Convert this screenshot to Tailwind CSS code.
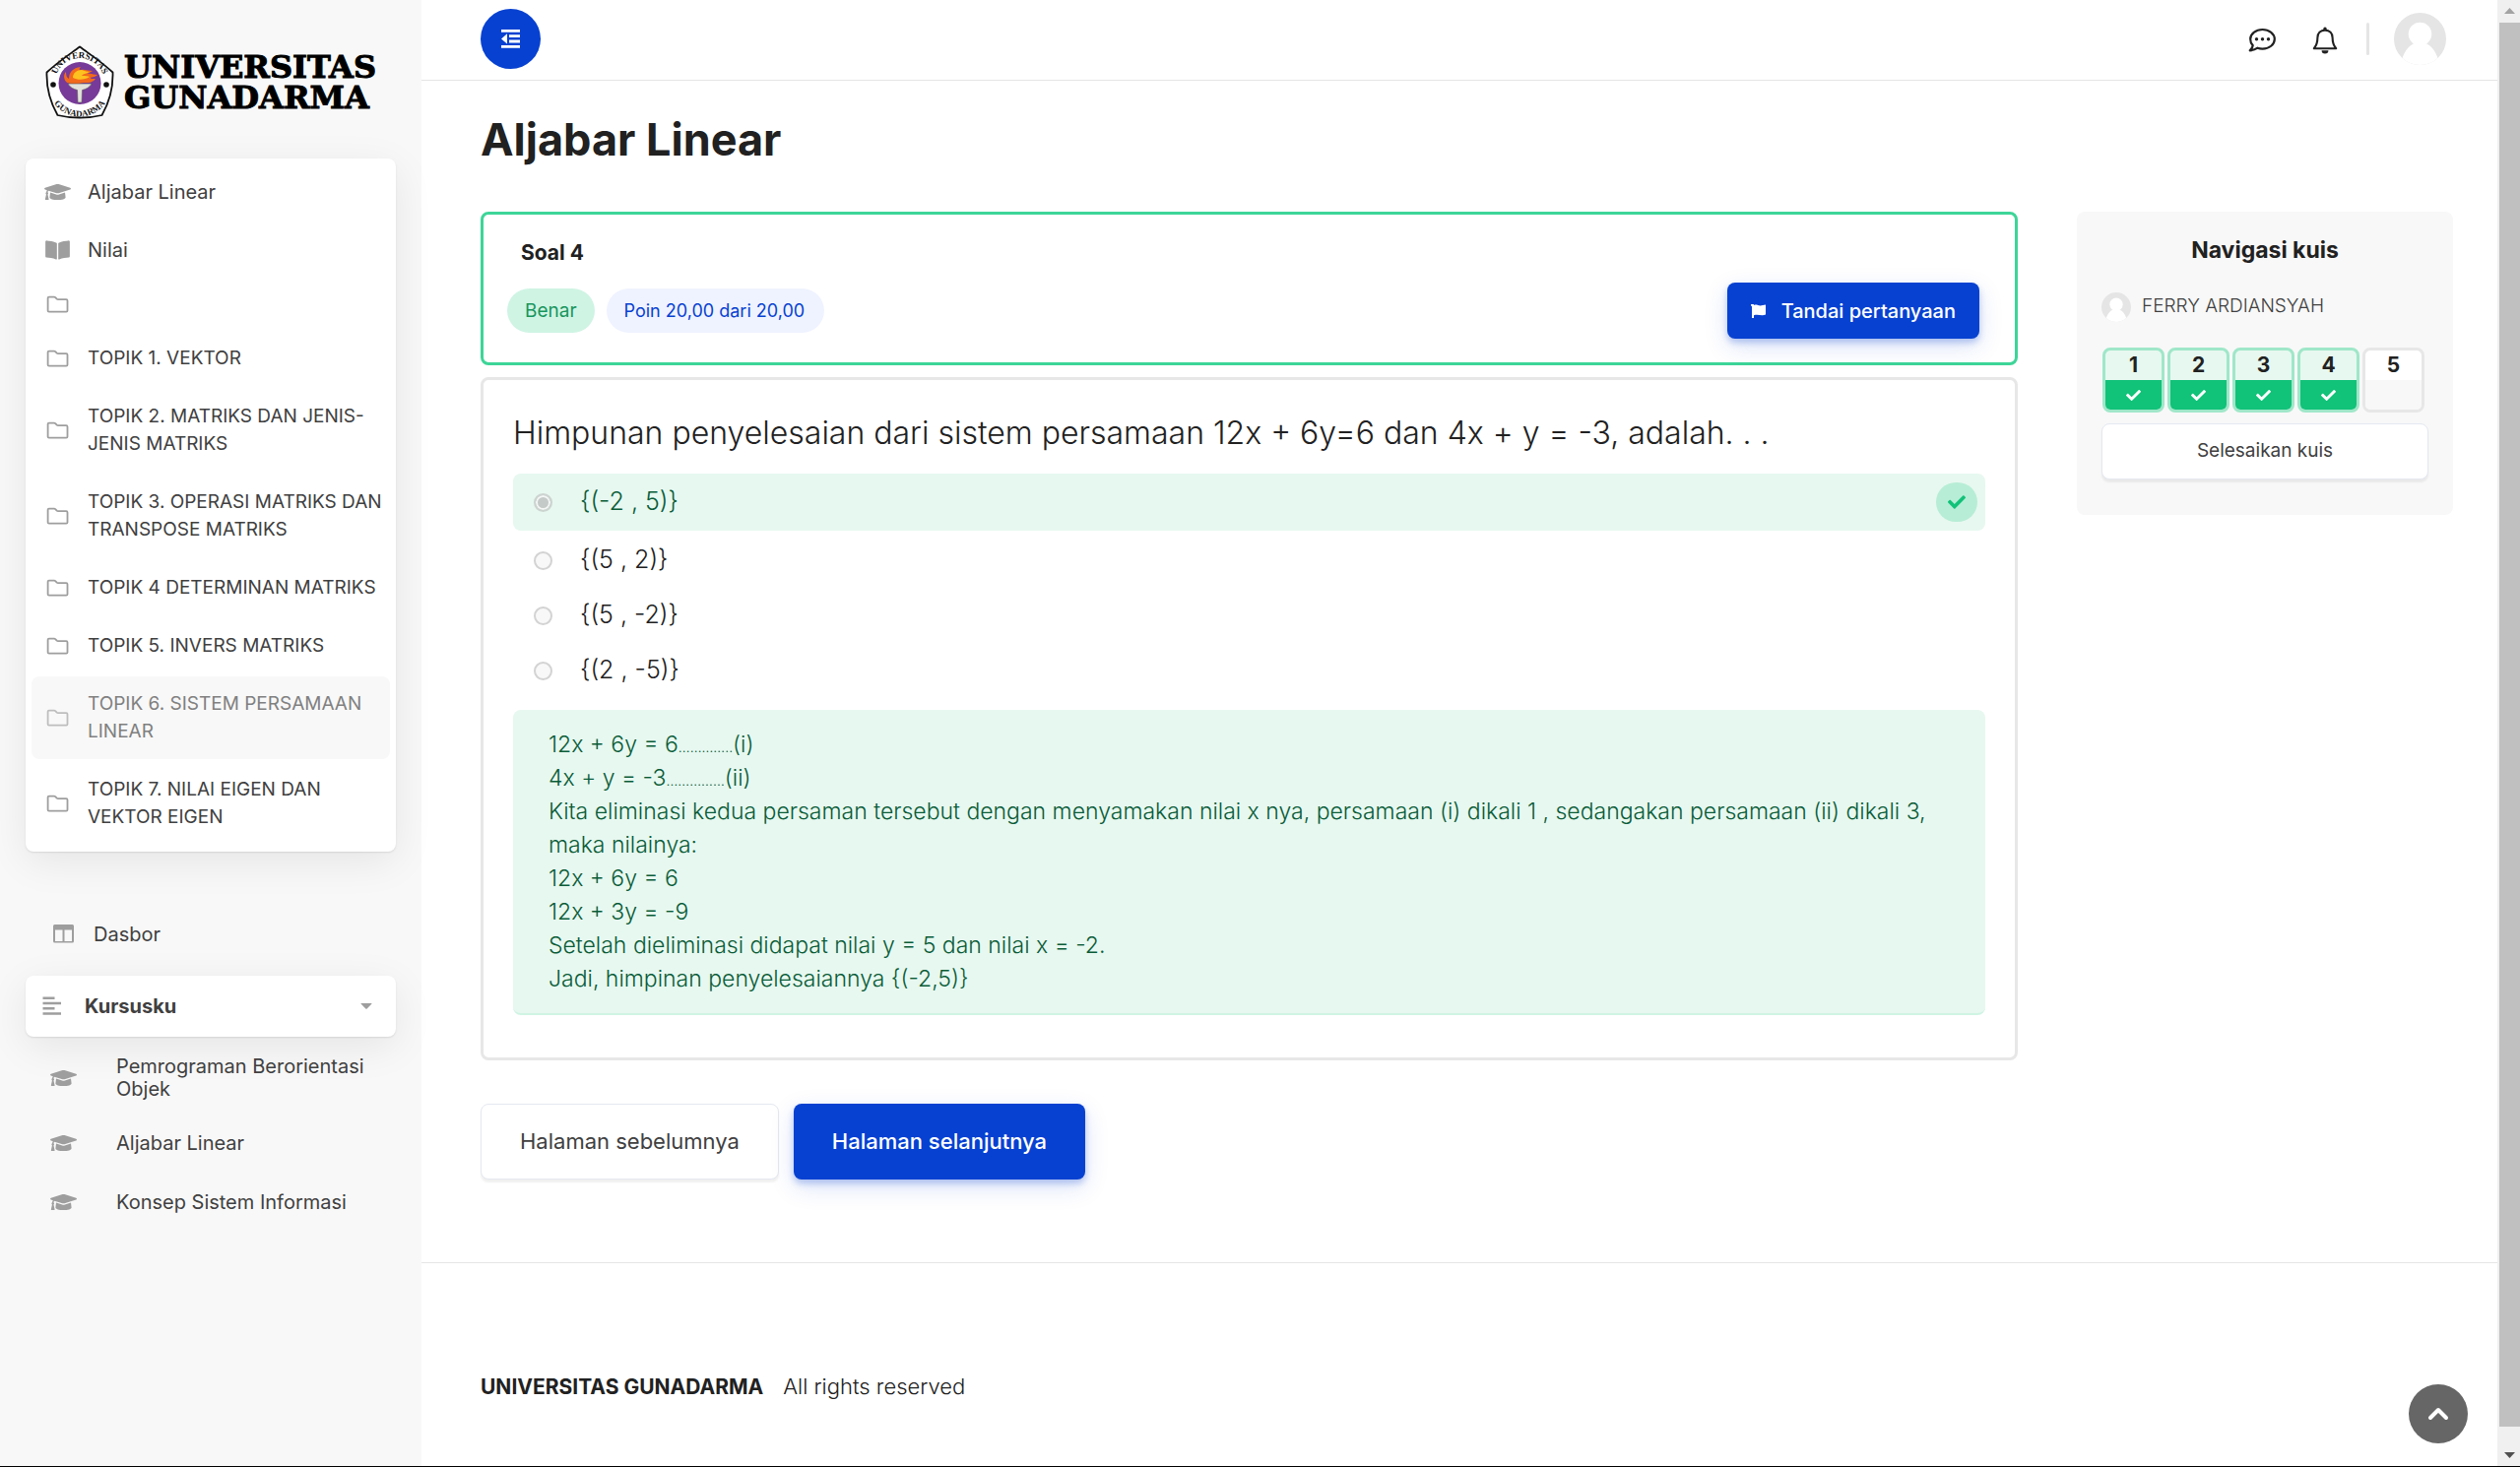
<!DOCTYPE html>
<html lang="id">
<head>
<meta charset="utf-8">
<meta name="viewport" content="width=device-width, initial-scale=1">
<title>Aljabar Linear</title>
<script src="https://cdn.jsdelivr.net/npm/@tailwindcss/browser@4"></script>
</head>
<body class="flex min-h-screen border-b border-black bg-white font-['Inter',sans-serif] text-[#212121]">

<!-- Icon definitions -->
<svg class="hidden" aria-hidden="true">
  <symbol id="cap" viewBox="0 0 640 512"><path fill="currentColor" d="M622.34 153.2L343.4 67.5c-15.2-4.67-31.6-4.67-46.79 0L17.66 153.2c-23.54 7.23-23.54 38.36 0 45.59l48.63 14.94c-10.67 13.19-17.23 29.28-17.88 46.9C38.78 266.15 32 276.11 32 288c0 10.78 5.68 19.85 13.86 25.65L20.33 428.53C18.11 438.52 25.71 448 35.94 448h56.11c10.24 0 17.84-9.48 15.62-19.47L82.14 313.65C90.32 307.85 96 298.78 96 288c0-11.57-6.47-21.25-15.66-26.87.76-15.02 8.44-28.3 20.69-36.72L296.6 284.5c9.06 2.78 26.44 6.25 46.79 0l278.95-85.7c23.55-7.24 23.55-38.36 0-45.6zM352.79 315.09c-28.53 8.76-52.84 3.92-65.59 0l-145.02-44.55L128 384c0 35.35 85.96 64 192 64s192-28.65 192-64l-14.18-113.47-145.03 44.56z"/></symbol>
  <symbol id="book" viewBox="0 0 576 512"><path fill="currentColor" d="M542.22 32.05c-54.8 3.11-163.72 14.43-230.96 55.59-4.64 2.84-7.27 7.89-7.27 13.17v363.87c0 11.55 12.63 18.85 23.28 13.49 69.18-34.82 169.23-44.32 218.7-46.92 16.89-.89 30.02-14.43 30.02-30.66V62.75c.01-17.71-15.35-31.74-33.77-30.7zM264.73 87.64C197.5 46.48 88.58 35.17 33.78 32.05 15.36 31.01 0 45.04 0 62.75V400.6c0 16.24 13.13 29.78 30.02 30.66 49.49 2.6 149.59 12.11 218.77 46.95 10.62 5.35 23.21-1.94 23.21-13.46V100.63c0-5.29-2.62-10.14-7.27-12.99z"/></symbol>
  <symbol id="folder" viewBox="0 0 22 18"><path fill="none" stroke="currentColor" stroke-width="1.8" stroke-linejoin="round" d="M2.3 1.6h5.2c.5 0 .9.2 1.2.5l1.5 1.6c.3.3.7.5 1.2.5h8.4c.7 0 1.2.5 1.2 1.2v10c0 .7-.5 1.2-1.2 1.2H2.3c-.7 0-1.2-.5-1.2-1.2V2.8c0-.7.5-1.2 1.2-1.2z"/></symbol>
  <symbol id="check" viewBox="0 0 512 512"><path fill="currentColor" d="M173.898 439.404l-166.4-166.4c-9.997-9.997-9.997-26.206 0-36.204l36.203-36.204c9.997-9.998 26.207-9.998 36.204 0L192 312.69 432.095 72.596c9.997-9.997 26.207-9.997 36.204 0l36.203 36.204c9.997 9.997 9.997 26.206 0 36.204l-294.4 294.401c-9.998 9.997-26.207 9.997-36.204-.001z"/></symbol>
  <symbol id="person" viewBox="0 0 54 54"><path fill="#e5e5e5" d="M0 0h54v54H0z"/><circle cx="27" cy="22" r="12" fill="#fff"/><path fill="#fff" d="M7 54C9 41 15 34 21 31.500h12C39 34 45 41 47 54z"/></symbol>
</svg>

<!-- Sidebar -->
<aside class="w-[428px] shrink-0 bg-[#f8f8f8] px-[26px]">
  <a href="#" class="flex h-[161px] gap-[10px] pt-[46px] pl-5">
    <svg class="h-[75px] w-[70px] shrink-0" viewBox="0 0 70 75" role="img" aria-label="Logo Universitas Gunadarma">
      <path d="M35 1.500C45 9 56 16 68.500 27.500 69 44 65 58 57.500 71 43 74.500 27 74.500 12.500 71 5 58 1 44 1.500 27.500 14 16 25 9 35 1.500z" fill="#fff" stroke="#111" stroke-width="1.800"/>
      <circle cx="35" cy="38.500" r="21.500" fill="#773a98"/>
      <path id="arcTop" d="M10 38A25 25 0 0 1 60 38" fill="none"/>
      <path id="arcBottom" d="M3.500 41A31.500 31.500 0 0 0 66.500 41" fill="none"/>
      <text class="font-['Liberation_Serif',serif] text-[9px] font-bold" fill="#111"><textPath href="#arcTop" startOffset="50%" text-anchor="middle">UNIVERSITAS</textPath></text>
      <text class="font-['Liberation_Serif',serif] text-[9px] font-bold" fill="#111"><textPath href="#arcBottom" startOffset="50%" text-anchor="middle">GUNADARMA</textPath></text>
      <circle cx="8" cy="40" r="2.800" fill="#111"/><circle cx="62" cy="40" r="2.800" fill="#111"/>
      <path d="M21 37c-3-4-2-8 0-10 0 4 1 6 3 7 0-7 4-11 12-12-2 2-2 3 0 3 4-1 8 1 12 1-3 2-5 2-5 3 4-1 6 1 10 1-3 3-6 2-7 3s3 1 5 1c-4 5-9 4-12 4-6 1-13 3-18-1z" fill="#f26a1b"/>
      <path d="M28 33c0-5 4-8 9-8 3 1 6 2 8 2-4 2-7 2-8 4 4 0 6 0 8 1-5 3-11 4-17 1z" fill="#fdc21f"/>
      <path d="M23 39h24c-2 4-6 5.500-9.500 6.500L37 58h-4l-.5-12.500C29 44.500 25 43 23 39z" fill="#e2e2da" stroke="#555" stroke-width=".6"/>
    </svg>
    <span class="pt-[7px] font-['DejaVu_Serif',serif] text-[32px] leading-[31px] font-bold text-black [-webkit-text-stroke:1px_black]">UNIVERSITAS<br>GUNADARMA</span>
  </a>

  <nav class="flex flex-col gap-[3px] rounded-lg bg-white px-[6px] pt-[6px] pb-[7px] text-[19px] leading-7 text-[#404040] shadow-[0_10px_40px_rgba(0,0,0,0.08),0_1px_2px_rgba(0,0,0,0.1)]">
    <a href="#" class="flex items-center gap-[17px] px-[13px] py-[14px] text-[20px]"><svg class="h-[22px] w-[27px] shrink-0 text-[#9e9e9e]"><use href="#cap"/></svg>Aljabar Linear</a>
    <a href="#" class="flex items-center gap-[17px] px-[13px] py-[14px] text-[20px]"><svg class="h-[22px] w-[27px] shrink-0 text-[#9e9e9e]"><use href="#book"/></svg>Nilai</a>
    <a href="#" aria-label="Folder" class="flex h-12 items-center px-[13px]"><svg class="h-[18px] w-[27px] shrink-0 text-[#9e9e9e]"><use href="#folder"/></svg></a>
    <a href="#" class="flex items-center gap-[17px] px-[13px] py-[14px]"><svg class="h-[18px] w-[27px] shrink-0 text-[#9e9e9e]"><use href="#folder"/></svg>TOPIK 1. VEKTOR</a>
    <a href="#" class="flex items-center gap-[17px] py-[14px] pl-[13px]"><svg class="h-[18px] w-[27px] shrink-0 text-[#9e9e9e]"><use href="#folder"/></svg>TOPIK 2. MATRIKS DAN JENIS-JENIS MATRIKS</a>
    <a href="#" class="flex items-center gap-[17px] py-[14px] pl-[13px]"><svg class="h-[18px] w-[27px] shrink-0 text-[#9e9e9e]"><use href="#folder"/></svg>TOPIK 3. OPERASI MATRIKS DAN TRANSPOSE MATRIKS</a>
    <a href="#" class="flex items-center gap-[17px] py-[14px] pl-[13px]"><svg class="h-[18px] w-[27px] shrink-0 text-[#9e9e9e]"><use href="#folder"/></svg>TOPIK 4 DETERMINAN MATRIKS</a>
    <a href="#" class="flex items-center gap-[17px] py-[14px] pl-[13px]"><svg class="h-[18px] w-[27px] shrink-0 text-[#9e9e9e]"><use href="#folder"/></svg>TOPIK 5. INVERS MATRIKS</a>
    <a href="#" aria-current="page" class="flex items-center gap-[17px] rounded-lg bg-[#f8f8f8] py-[14px] pl-[13px] text-[#808080]"><svg class="h-[18px] w-[27px] shrink-0 text-[#bdbdbd]"><use href="#folder"/></svg>TOPIK 6. SISTEM PERSAMAAN LINEAR</a>
    <a href="#" class="flex items-center gap-[17px] py-[14px] pr-8 pl-[13px]"><svg class="h-[18px] w-[27px] shrink-0 text-[#9e9e9e]"><use href="#folder"/></svg>TOPIK 7. NILAI EIGEN DAN VEKTOR EIGEN</a>
  </nav>

  <nav class="pt-14 text-[20px] text-[#404040]">
    <a href="#" class="flex h-14 items-center gap-5 pl-7">
      <svg class="h-[20px] w-[21px] shrink-0 text-[#9e9e9e]" viewBox="0 0 21 20"><path fill="currentColor" fill-rule="evenodd" d="M1.500 0h18A1.500 1.500 0 0 1 21 1.500v15.500a1.500 1.500 0 0 1-1.500 1.500h-18A1.500 1.500 0 0 1 0 17V1.500A1.500 1.500 0 0 1 1.500 0zM2 5.500V17h7.500V5.500zM11.500 5.500V17H19V5.500z"/></svg>
      Dasbor
    </a>
    <button type="button" aria-expanded="true" class="mt-[14px] flex h-[62px] w-full items-center rounded-lg bg-white pr-6 pl-[17px] text-left font-bold shadow-[0_10px_40px_rgba(0,0,0,0.08),0_1px_2px_rgba(0,0,0,0.1)]">
      <svg class="h-5 w-[19px] shrink-0 text-[#9e9e9e]" viewBox="0 0 19 20"><path fill="currentColor" d="M.500.500h12v2.500H.5zM.5 5.700h18.500v2.500H.5zM.5 11h12v2.500H.5zM.5 16.300h18.500v2.500H.5z"/></svg>
      <span class="ml-6 flex-1">Kursusku</span>
      <svg class="h-[6px] w-3" viewBox="0 0 12 6"><path fill="#9e9e9e" d="M1 0h10q1 0 .3.800L6.700 5.500q-.7.700-1.400 0L.7.800Q0 0 1 0z"/></svg>
    </button>
    <a href="#" class="mt-[10px] flex h-16 items-center gap-10 pl-[25px] leading-[23px]"><svg class="h-[22px] w-[27px] shrink-0 text-[#9e9e9e]"><use href="#cap"/></svg>Pemrograman Berorientasi Objek</a>
    <a href="#" class="mt-1 flex h-[60px] items-center gap-10 pl-[25px]"><svg class="h-[22px] w-[27px] shrink-0 text-[#9e9e9e]"><use href="#cap"/></svg>Aljabar Linear</a>
    <a href="#" class="flex h-[60px] items-center gap-10 pl-[25px]"><svg class="h-[22px] w-[27px] shrink-0 text-[#9e9e9e]"><use href="#cap"/></svg>Konsep Sistem Informasi</a>
  </nav>
</aside>

<div class="flex min-w-0 flex-1 flex-col">
  <header class="flex h-[82px] items-center border-b border-[#e5e5e5] pr-[52px] pb-[3px] pl-[60px]">
    <button type="button" aria-label="Menu" class="flex size-[61px] items-center justify-center rounded-full bg-[#0741d1] text-white">
      <svg class="size-[19px]" viewBox="0 0 19 19"><path fill="currentColor" d="M0 0h19v2.800H0zM8 5.300h11V8H8zM8 10.600h11v2.800H8zM0 16h19v2.800H0zM6 4.300v10.200L0 9.400z"/></svg>
    </button>
    <button type="button" aria-label="Pesan" class="mt-1 ml-auto">
      <svg class="size-7" viewBox="0 0 28 28" fill="none" stroke="#212121" stroke-width="2.200" stroke-linejoin="round"><path d="M14.500 3c6.800 0 12.300 4.300 12.300 9.800s-5.500 9.800-12.300 9.800c-1.800 0-3.500-.3-5-.9-1.700 1.200-4.500 2.500-7.800 2.600 1.800-1.700 2.900-3.800 3-5.200C2.900 17.400 2.200 15.300 2.200 12.800 2.200 7.300 7.700 3 14.500 3z"/><g fill="#212121" stroke="none"><circle cx="8.500" cy="12.800" r="1.700"/><circle cx="14.500" cy="12.800" r="1.700"/><circle cx="20.500" cy="12.800" r="1.700"/></g></svg>
    </button>
    <button type="button" aria-label="Notifikasi" class="mt-1 ml-9">
      <svg class="size-7" viewBox="0 0 28 28"><path fill="none" stroke="#212121" stroke-width="2.100" stroke-linejoin="round" d="M14 3.600c-4.700 0-7.600 3.300-7.600 7.600 0 5.500-1.400 8.400-3.600 11h22.400c-2.200-2.600-3.600-5.500-3.600-11 0-4.300-2.900-7.600-7.600-7.600z"/><path fill="#212121" d="M12.300 2.300a1.700 1.700 0 0 1 3.400 0V4h-3.400zM10.600 24.300h6.800a3.400 3.200 0 0 1-6.800 0z"/></svg>
    </button>
    <span class="ml-7 h-[33px] w-[3px] rounded bg-[#e5e5e5]"></span>
    <button type="button" aria-label="Profil" class="ml-[25px]"><svg class="size-[53px] rounded-full"><use href="#person"/></svg></button>
  </header>

  <main class="pt-8 pr-[45px] pl-[60px]">
    <h1 class="text-[45px] leading-[56px] font-bold">Aljabar Linear</h1>
    <div class="mt-[45px] flex items-start gap-[60px]">
      <div class="min-w-0 flex-1">
        <section class="h-[156px] rounded-lg border-3 border-[#3dd598] pt-[23px] pr-9 pl-6">
          <h2 class="pl-[14px] text-[21px] leading-8 font-bold">Soal 4</h2>
          <div class="mt-[14px] flex items-center">
            <span class="rounded-full bg-[#cff4e4] px-[18px] text-[19px] leading-[45px] text-[#18955c]">Benar</span>
            <span class="ml-3 rounded-full bg-[#eff3ff] pr-5 pl-[18px] text-[18px] leading-[45px] text-[#0741d1]">Poin 20,00 dari 20,00</span>
            <button type="button" class="ml-auto flex h-[57px] items-center gap-4 rounded-lg bg-[#0741d1] px-6 text-[20px] font-medium text-white shadow-[0_4px_6px_rgba(7,65,209,0.25),0_8px_24px_rgba(7,65,209,0.15)]">
              <svg class="h-[14px] w-[15px]" viewBox="0 0 15 14"><path fill="currentColor" d="M0 1a1.500 1.500 0 0 1 3 0c3-1.300 5 1.300 9 0L15 .5v10c-4 2-7-.7-12 .7V14H1V2.200A1.500 1.500 0 0 1 0 1z"/></svg>
              Tandai pertanyaan
            </button>
          </div>
        </section>

        <section class="mt-3 rounded-lg border-3 border-[#e7e7e7] px-[30px] pt-[30px] pb-[43px]">
          <fieldset>
            <legend class="text-[32px] leading-[48px] font-light">Himpunan penyelesaian dari sistem persamaan 12x + 6y=6 dan 4x + y = -3, adalah. . .</legend>
            <div class="mt-[17px] flex flex-col text-[25px] font-light">
              <div class="mb-[2px] flex h-[58px] items-center rounded-lg bg-[#e7f8f0] pr-2 pl-[21px] text-[#0a5c38]">
                <input id="a" type="radio" name="jawaban" checked disabled class="size-[19px] appearance-none rounded-full border-2 border-[#ccd4d0] bg-[#c4cac7] shadow-[inset_0_0_0_2px_#f3f6f5]">
                <label for="a" class="ml-7 flex-1">{(-2 , 5)}</label>
                <span class="flex h-10 w-[42px] items-center justify-center rounded-full bg-[#b7edd6] text-[#11c279]"><svg class="size-[18px]" aria-label="Benar"><use href="#check"/></svg></span>
              </div>
              <div class="flex h-14 items-center pl-[21px]"><input id="b" type="radio" name="jawaban" disabled class="size-[19px] appearance-none rounded-full border-2 border-[#d3d3d3] bg-[#f8f8f8]"><label for="b" class="ml-7">{(5 , 2)}</label></div>
              <div class="flex h-14 items-center pl-[21px]"><input id="c" type="radio" name="jawaban" disabled class="size-[19px] appearance-none rounded-full border-2 border-[#d3d3d3] bg-[#f8f8f8]"><label for="c" class="ml-7">{(5 , -2)}</label></div>
              <div class="flex h-14 items-center pl-[21px]"><input id="d" type="radio" name="jawaban" disabled class="size-[19px] appearance-none rounded-full border-2 border-[#d3d3d3] bg-[#f8f8f8]"><label for="d" class="ml-7">{(2 , -5)}</label></div>
            </div>
          </fieldset>
          <div class="mt-3 rounded-lg border-b-2 border-[#cff4e4] bg-[#e7f8f0] px-9 pt-[18px] pb-[18px] text-[23px] leading-[34px] font-light text-[#0a5c38]">
            <p>12x + 6y = 6<span class="text-[14px] leading-none">…………..</span>(i)</p>
            <p>4x + y = -3<span class="text-[14px] leading-none">……………</span>(ii)</p>
            <p>Kita eliminasi kedua persaman tersebut dengan menyamakan nilai x nya, persamaan (i) dikali 1 , sedangakan persamaan (ii) dikali 3, maka nilainya:</p>
            <p>12x + 6y = 6</p>
            <p>12x + 3y = -9</p>
            <p>Setelah dieliminasi didapat nilai y = 5 dan nilai x = -2.</p>
            <p>Jadi, himpinan penyelesaiannya {(-2,5)}</p>
          </div>
        </section>

        <div class="mt-11 flex gap-[15px] text-[22px]">
          <button type="button" class="h-[77px] rounded-lg border border-[#e4e8f0] bg-white px-[39px] text-[#404040] shadow-[0_3px_2px_rgba(0,0,0,0.06)]">Halaman sebelumnya</button>
          <button type="button" class="h-[77px] rounded-lg bg-[#0741d1] px-[39px] font-medium text-white shadow-[0_4px_6px_rgba(7,65,209,0.25),0_8px_24px_rgba(7,65,209,0.15)]">Halaman selanjutnya</button>
        </div>
      </div>

      <section class="w-[382px] shrink-0 rounded-lg bg-[#f8f8f8] px-[25px] pt-6 pb-9">
        <h2 class="text-center text-[23px] leading-[30px] font-bold">Navigasi kuis</h2>
        <div class="mt-7 flex h-[30px] gap-[11px] text-[19px] leading-7 font-light text-[#404040]"><svg class="size-[30px] shrink-0 rounded-full"><use href="#person"/></svg>FERRY ARDIANSYAH</div>
        <div class="mt-[26px] flex gap-[3px] pl-px text-center text-[21px] leading-[30px] font-bold">
          <a href="#" class="w-[63px] overflow-hidden rounded-lg border-3 border-[#9fe7c9] bg-[#e7f8f0]">1<span class="flex h-[30px] items-center justify-center bg-[#11c279] text-white"><svg class="size-[15px]"><use href="#check"/></svg></span></a>
          <a href="#" class="w-[63px] overflow-hidden rounded-lg border-3 border-[#9fe7c9] bg-[#e7f8f0]">2<span class="flex h-[30px] items-center justify-center bg-[#11c279] text-white"><svg class="size-[15px]"><use href="#check"/></svg></span></a>
          <a href="#" class="w-[63px] overflow-hidden rounded-lg border-3 border-[#9fe7c9] bg-[#e7f8f0]">3<span class="flex h-[30px] items-center justify-center bg-[#11c279] text-white"><svg class="size-[15px]"><use href="#check"/></svg></span></a>
          <a href="#" class="w-[63px] overflow-hidden rounded-lg border-3 border-[#9fe7c9] bg-[#e7f8f0]">4<span class="flex h-[30px] items-center justify-center bg-[#11c279] text-white"><svg class="size-[15px]"><use href="#check"/></svg></span></a>
          <a href="#" class="w-[63px] overflow-hidden rounded-lg border-3 border-[#e7e7e7] bg-white">5<span class="block h-[30px] bg-[#f8f8f8]"></span></a>
        </div>
        <button type="button" class="mt-[11px] h-[57px] w-full rounded-lg border border-[#e4e8f0] bg-white text-[19px] text-[#404040] shadow-[0_3px_2px_rgba(0,0,0,0.06)]">Selesaikan kuis</button>
      </section>
    </div>
  </main>

  <footer class="mt-[84px] flex items-baseline gap-5 border-t border-[#e5e5e5] pt-[109px] pl-[60px] leading-8">
    <span class="text-[21px] font-bold">UNIVERSITAS GUNADARMA</span>
    <span class="text-[22px] font-light">All rights reserved</span>
  </footer>
</div>

<a href="#" aria-label="Kembali ke atas" class="fixed right-[53px] bottom-6 flex size-[60px] items-center justify-center rounded-full bg-[#666]">
  <svg class="h-[14px] w-[22px]" viewBox="0 0 22 14"><path fill="none" stroke="#fff" stroke-width="4" stroke-linecap="round" stroke-linejoin="round" d="M3 11l8-8 8 8"/></svg>
</a>

<!-- Scroll track -->
<div aria-hidden="true" class="flex w-[23px] shrink-0 flex-col bg-[#f0f0f0]">
  <svg class="h-[23px] w-full" viewBox="0 0 23 23"><path fill="#a3a3a3" d="M7 14l5.500-6L18 14z"/></svg>
  <div class="ml-[2px] flex-1 bg-[#c0c0c0]"></div>
  <svg class="h-10 w-full" viewBox="0 0 23 40"><path fill="#505050" d="M7 26l5.500 6L18 26z"/></svg>
</div>

</body>
</html>
